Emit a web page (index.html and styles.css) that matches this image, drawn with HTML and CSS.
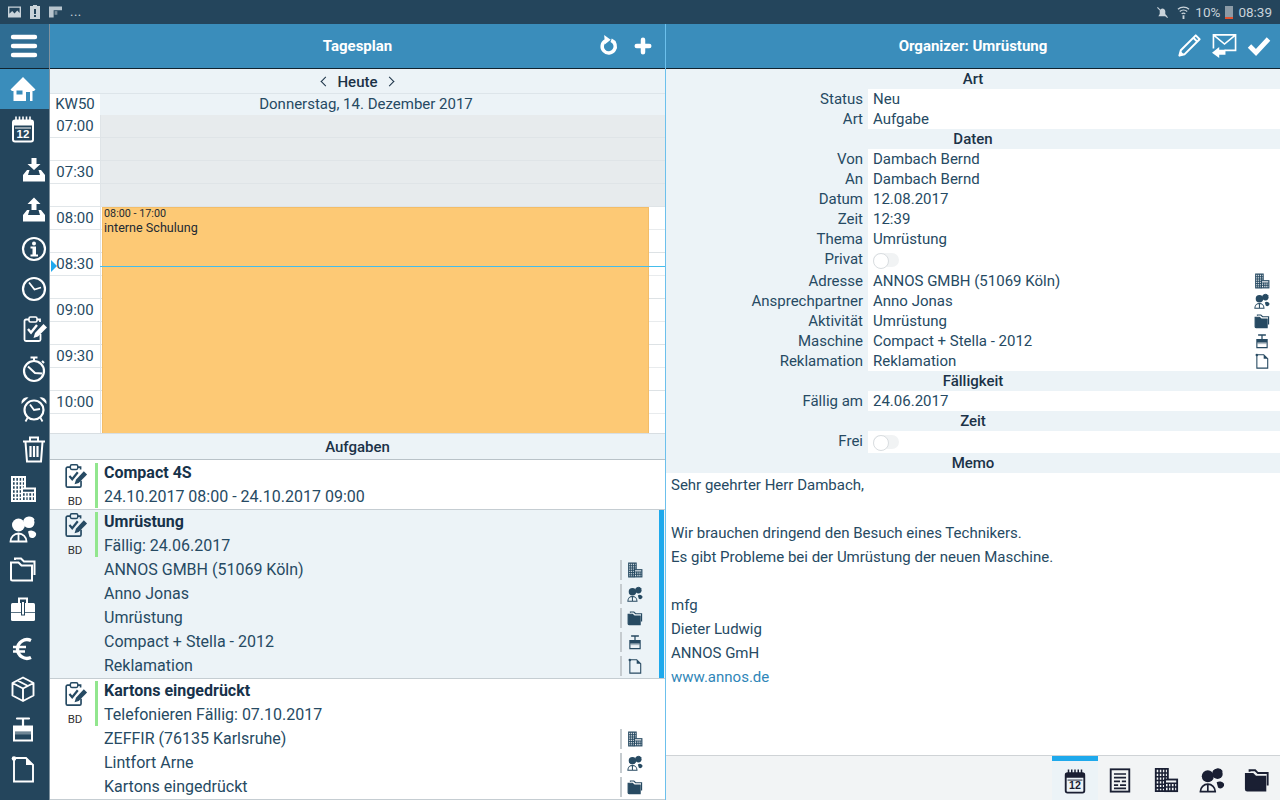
FILE: index.html
```html
<!DOCTYPE html>
<html lang="de">
<head>
<meta charset="utf-8">
<title>Organizer</title>
<link rel="stylesheet" href="styles.css">
</head>
<body>
<svg class="defs" width="0" height="0" aria-hidden="true">
  <symbol id="i-home" viewBox="0 0 28 28"><path fill="currentColor" d="M14 2 L26.500 14.500 L25 16 H23.500 V26 H4.500 V16 H3 L1.500 14.500 Z"/><path fill="var(--hole,#24455c)" d="M7.500 15.500 H13.500 V19.500 H7.500 Z M17 17 H21 V26 H17 Z"/></symbol>
  <symbol id="i-cal" viewBox="0 0 28 28"><g fill="none" stroke="currentColor"><rect x="4" y="5.500" width="20" height="21" rx="2" stroke-width="2"/><path stroke-width="1.600" d="M7 1.500V7M10.500 1.500V7M14 1.500V7M17.500 1.500V7M21 1.500V7"/></g><rect fill="currentColor" x="4" y="5.500" width="20" height="5"/><path fill="currentColor" d="M6 12.500H22V13.500H6Z"/></symbol>
  <symbol id="i-down" viewBox="0 0 28 28"><path fill="currentColor" d="M11.500 3H16.500V9H20.500L14 15L7.500 9H11.500Z M3 20L7 15H9.500L8 20H20L18.500 15H21L25 20V26.500H3Z"/></symbol>
  <symbol id="i-up" viewBox="0 0 28 28"><path fill="currentColor" d="M14 2.500L20.500 9H16.500V15H11.500V9H7.500Z M3 20L7 15H9.500L8 20H20L18.500 15H21L25 20V26.500H3Z"/></symbol>
  <symbol id="i-info" viewBox="0 0 28 28"><circle cx="14" cy="14" r="11" fill="none" stroke="currentColor" stroke-width="2.200"/><circle cx="14" cy="8.500" r="2" fill="currentColor"/><path fill="currentColor" d="M10.500 11.500H16V19.500H18V21.500H10.500V19.500H12.500V13.500H10.500Z"/></symbol>
  <symbol id="i-clock" viewBox="0 0 28 28"><circle cx="14" cy="14" r="11" fill="none" stroke="currentColor" stroke-width="2.200"/><path fill="none" stroke="currentColor" stroke-width="1.800" d="M9 7.500L14.500 14.500L21 12.500"/></symbol>
  <symbol id="i-task" viewBox="0 0 28 28"><g fill="none" stroke="currentColor"><path stroke-width="1.800" d="M9 4.500H6A1.500 1.500 0 0 0 4.500 6V24.500A1.500 1.500 0 0 0 6 26H19A1.500 1.500 0 0 0 20.500 24.500V19M17 4.500H20V7"/><rect x="9" y="2" width="8" height="5" rx="1.500" stroke-width="1.600"/><path stroke-width="2.400" d="M8 14L11 17.500L17 10"/></g><path fill="currentColor" d="M23.500 9L27 12.500L18 21.500L13.500 23L15 18Z"/></symbol>
  <symbol id="i-watch" viewBox="0 0 28 28"><circle cx="14" cy="16" r="10" fill="none" stroke="currentColor" stroke-width="2.200"/><path fill="none" stroke="currentColor" stroke-width="2" d="M10.500 2.500H17.500M14 2.500V6M22 6L24 8"/><path fill="none" stroke="currentColor" stroke-width="2" d="M8 11.500L15 18L22 18.500"/></symbol>
  <symbol id="i-alarm" viewBox="0 0 28 28"><circle cx="14" cy="15" r="9.500" fill="none" stroke="currentColor" stroke-width="2.200"/><path fill="currentColor" d="M1.500 9A5.500 5.500 0 0 1 8.500 2.500ZM26.500 9A5.500 5.500 0 0 0 19.500 2.500Z"/><path fill="none" stroke="currentColor" stroke-width="1.800" d="M10 9.500L14 15L20 14M7.500 23L5.500 26.500M20.500 23L22.500 26.500"/></symbol>
  <symbol id="i-trash" viewBox="0 0 28 28"><g fill="none" stroke="currentColor" stroke-width="2"><path d="M3 6.500H25M10 6V2.500H18V6M5.500 7L7 26.500H21L22.500 7"/><path stroke-width="2.200" d="M10.500 11V22M14 11V22M17.500 11V22"/></g></symbol>
  <symbol id="i-bldg" viewBox="0 0 28 28"><g fill="none" stroke="currentColor"><path stroke-width="2" d="M13 26H3V2H16V13"/><path stroke-width="1.700" d="M3 6.500H16M3 10.500H16M3 14.500H13M3 18.500H13M3 22.500H13M6.500 2V26M9.800 2V26M13 2V26"/><rect x="13" y="13.500" width="13" height="12.500" stroke-width="2"/><path stroke-width="1.700" d="M13 17.500H26M13 21.500H26M16.500 17V26M19.500 17V26M23 17V26"/></g></symbol>
  <symbol id="i-people" viewBox="0 0 28 28"><circle cx="9.500" cy="10" r="6.500" fill="currentColor"/><path fill="none" stroke="currentColor" stroke-width="1.800" d="M1.500 26.500A8 8 0 0 1 17.500 26.500ZM9.500 19V26.500"/><circle cx="20" cy="7.500" r="5.500" fill="currentColor"/><path fill="none" stroke="currentColor" stroke-width="1.500" d="M15 6A5.500 5.500 0 0 1 25 5"/><path fill="currentColor" d="M19 16.500A6 6 0 0 1 27 18A4 4 0 0 1 20.500 22Z"/></symbol>
  <symbol id="i-folder" viewBox="0 0 28 28"><g stroke="currentColor" stroke-width="2"><path fill="none" d="M6 5V3.500H12L15 6.500H25.500V20"/><path fill="var(--fi,none)" d="M2 7.500H9.500L12.500 10.500H23V25.500H3.500A1.500 1.500 0 0 1 2 24Z"/></g></symbol>
  <symbol id="i-case" viewBox="0 0 28 28"><path fill="none" stroke="currentColor" stroke-width="2" d="M10 8V3.500H18V8"/><path fill="currentColor" d="M2 9.500A1.500 1.500 0 0 1 3.500 8H24.500A1.500 1.500 0 0 1 26 9.500V24.500A1.500 1.500 0 0 1 24.500 26H3.500A1.500 1.500 0 0 1 2 24.500Z"/><path fill="var(--hole,#24455c)" d="M2 17H26V17.800H2ZM12 6H16V20.500H12Z"/><path fill="currentColor" d="M13 7H15V19.500H13Z"/></symbol>
  <symbol id="i-euro" viewBox="0 0 28 28"><path fill="none" stroke="currentColor" stroke-width="3.400" d="M22 5.500A9.500 9.500 0 0 0 8.500 14A9.500 9.500 0 0 0 22 22.500"/><path fill="none" stroke="currentColor" stroke-width="2.600" d="M4 12H17M4 16.500H16"/></symbol>
  <symbol id="i-box" viewBox="0 0 28 28"><path fill="none" stroke="currentColor" stroke-width="1.900" stroke-linejoin="round" d="M14 2.500L24.500 8V20.500L14 26L3.500 20.500V8ZM3.500 8L14 13.500L24.500 8M14 13.500V26M8.500 5.500L19 11"/></symbol>
  <symbol id="i-mach" viewBox="0 0 28 28"><path fill="none" stroke="currentColor" stroke-width="2.200" stroke-linecap="round" d="M8 3.500H20M14 3.500V11"/><path fill="currentColor" fill-rule="evenodd" d="M4 10.500H24V26.500H4ZM6 16.500V24.500H22V16.500Z"/><rect x="6" y="16.500" width="16" height="3" fill="currentColor" opacity=".35"/></symbol>
  <symbol id="i-doc" viewBox="0 0 28 28"><path fill="none" stroke="currentColor" stroke-width="1.900" d="M7 3H17L24 10V26.500H5V5"/><path fill="currentColor" d="M17 3L24 10H17Z"/><circle cx="5" cy="3.500" r="2.300" fill="currentColor"/></symbol>
  <symbol id="i-list" viewBox="0 0 28 28"><rect x="4" y="2.500" width="20" height="24" fill="none" stroke="currentColor" stroke-width="2"/><path stroke="currentColor" stroke-width="1.800" d="M7.500 7.500H20.500M7.500 11.500H20.500M7.500 15.500H14M16 15.500H20.500M7.500 19.500H12M14 19.500H20.500M7.500 23H20.500"/></symbol>
  <symbol id="i-refresh" viewBox="0 0 24 24"><path fill="none" stroke="currentColor" stroke-width="4" d="M8.500 6.500A7.500 7.500 0 1 0 15 6"/><path fill="currentColor" d="M7 0L14.500 5.500L8 10.500Z"/></symbol>
  <symbol id="i-plus" viewBox="0 0 24 24"><path fill="none" stroke="currentColor" stroke-width="5.400" stroke-linecap="round" d="M12 4.500V19.500M4.500 12H19.500"/></symbol>
  <symbol id="i-pencil" viewBox="0 0 26 26"><path fill="none" stroke="currentColor" stroke-width="2.100" stroke-linejoin="round" d="M19.500 2.500L23.500 6.500L8 22L2.500 23.500L4 18ZM17 5L21 9"/><path fill="currentColor" d="M2 24L3.500 18.500L7.500 22.500Z"/></symbol>
  <symbol id="i-mail" viewBox="0 0 26 26"><path fill="none" stroke="currentColor" stroke-width="1.700" d="M1.500 16V2H24.500V18H13M1.500 2L13 11.500L24.500 2"/><path fill="currentColor" d="M0 20.500L7.500 14.500V17.500H14V22.500H7.500V26Z"/></symbol>
  <symbol id="i-check" viewBox="0 0 24 24"><path fill="none" stroke="currentColor" stroke-width="4.800" d="M2.500 12L9 18.500L21.500 5"/></symbol>
  <symbol id="i-menu" viewBox="0 0 28 24"><path fill="none" stroke="currentColor" stroke-width="4.400" stroke-linecap="round" d="M3 3H25M3 12H25M3 21H25"/></symbol>
</svg>

<div class="status">
  <div class="status-left">
    <svg class="st-img" viewBox="0 0 14 12"><path fill="currentColor" fill-rule="evenodd" d="M0 0H14V12H0ZM1.500 1.500V8L4.500 5L7 7.500L10 4.500L12.500 7V1.500Z"/></svg>
    <svg class="st-bat" viewBox="0 0 10 14"><path fill="currentColor" fill-rule="evenodd" d="M3 0H7V1H10V14H0V1H3ZM4 4V9H6V4ZM4 10V12H6V10Z"/></svg>
    <svg class="st-sig" viewBox="0 0 14 12"><path fill="currentColor" opacity=".9" d="M0 0H14V4H5V12H0Z"/><path fill="currentColor" opacity=".5" d="M6 5H9V9H6Z"/></svg>
    <span class="st-dots">...</span>
  </div>
  <div class="status-right">
    <svg class="st-mute" viewBox="0 0 14 14"><path fill="currentColor" d="M5 3.500A3 3 0 0 1 10 5.500V9L12 11H2.500L4 8.500V5Z"/><path stroke="currentColor" stroke-width="1.200" d="M1.500 1.500L12.500 12.500"/></svg>
    <svg class="st-wifi" viewBox="0 0 14 14"><path fill="none" stroke="currentColor" stroke-width="1.300" d="M1 3.500A9 9 0 0 1 13 3.500M3 6A6 6 0 0 1 11 6M5 8.500A3 3 0 0 1 9 8.500"/><path fill="currentColor" d="M6 10H8V14H6Z"/></svg>
    <span class="st-pct">10%</span>
    <span class="st-battery"><span class="st-battery-low"></span></span>
    <span class="st-time">08:39</span>
  </div>
</div>

<div class="app">
  <nav class="side">
    <div class="side-menu"><svg class="menu-ic"><use href="#i-menu"/></svg></div>
    <div class="side-item active"><svg class="ic"><use href="#i-home"/></svg></div>
    <div class="side-item"><svg class="ic" viewBox="0 0 28 28"><use href="#i-cal"/><text class="cal-num" x="14" y="23">12</text></svg></div>
    <div class="side-item indent"><svg class="ic"><use href="#i-down"/></svg></div>
    <div class="side-item indent"><svg class="ic"><use href="#i-up"/></svg></div>
    <div class="side-item indent"><svg class="ic"><use href="#i-info"/></svg></div>
    <div class="side-item indent"><svg class="ic"><use href="#i-clock"/></svg></div>
    <div class="side-item indent"><svg class="ic"><use href="#i-task"/></svg></div>
    <div class="side-item indent"><svg class="ic"><use href="#i-watch"/></svg></div>
    <div class="side-item indent"><svg class="ic"><use href="#i-alarm"/></svg></div>
    <div class="side-item indent"><svg class="ic"><use href="#i-trash"/></svg></div>
    <div class="side-item"><svg class="ic"><use href="#i-bldg"/></svg></div>
    <div class="side-item"><svg class="ic"><use href="#i-people"/></svg></div>
    <div class="side-item"><svg class="ic"><use href="#i-folder"/></svg></div>
    <div class="side-item"><svg class="ic"><use href="#i-case"/></svg></div>
    <div class="side-item"><svg class="ic"><use href="#i-euro"/></svg></div>
    <div class="side-item"><svg class="ic"><use href="#i-box"/></svg></div>
    <div class="side-item"><svg class="ic"><use href="#i-mach"/></svg></div>
    <div class="side-item"><svg class="ic"><use href="#i-doc"/></svg></div>
  </nav>

  <section class="pane pane-left">
    <header class="bar">
      <h1 class="bar-title">Tagesplan</h1>
      <div class="bar-actions bar-actions-left">
        <svg class="bar-ic-r"><use href="#i-refresh"/></svg>
        <svg class="bar-ic-s"><use href="#i-plus"/></svg>
      </div>
    </header>

    <div class="day-nav"><span class="chev chev-l"></span><b>Heute</b><span class="chev chev-r"></span></div>
    <div class="day-head"><div class="kw">KW50</div><div class="day-date">Donnerstag, 14. Dezember 2017</div></div>

    <div class="grid">
      <div class="slot off"><div class="slot-time">07:00</div><div class="slot-body"><div class="half"></div><div class="half"></div></div></div>
      <div class="slot off"><div class="slot-time">07:30</div><div class="slot-body"><div class="half"></div><div class="half"></div></div></div>
      <div class="slot"><div class="slot-time">08:00</div><div class="slot-body"><div class="half"></div><div class="half"></div></div></div>
      <div class="slot"><div class="slot-time">08:30</div><div class="slot-body"><div class="half"></div><div class="half"></div></div></div>
      <div class="slot"><div class="slot-time">09:00</div><div class="slot-body"><div class="half"></div><div class="half"></div></div></div>
      <div class="slot"><div class="slot-time">09:30</div><div class="slot-body"><div class="half"></div><div class="half"></div></div></div>
      <div class="slot"><div class="slot-time">10:00</div><div class="slot-body"><div class="half"></div><div class="half"></div></div></div>
      <div class="event"><div class="event-time">08:00 - 17:00</div><div class="event-title">interne Schulung</div></div>
      <div class="now-line"></div>
      <div class="now-mark"></div>
    </div>

    <div class="sec-head">Aufgaben</div>

    <div class="tasks">
      <article class="task">
        <div class="task-side"><svg class="task-ic"><use href="#i-task"/></svg><span class="task-who">BD</span></div>
        <div class="task-main">
          <div class="row row-title">Compact 4S</div>
          <div class="row">24.10.2017 08:00 - 24.10.2017 09:00</div>
        </div>
      </article>
      <article class="task selected">
        <div class="task-side"><svg class="task-ic"><use href="#i-task"/></svg><span class="task-who">BD</span></div>
        <div class="task-main">
          <div class="row row-title">Umrüstung</div>
          <div class="row">Fällig: 24.06.2017</div>
          <div class="row link"><span>ANNOS GMBH (51069 Köln)</span><span class="link-ic"><svg class="mini"><use href="#i-bldg"/></svg></span></div>
          <div class="row link"><span>Anno Jonas</span><span class="link-ic"><svg class="mini"><use href="#i-people"/></svg></span></div>
          <div class="row link"><span>Umrüstung</span><span class="link-ic filled"><svg class="mini"><use href="#i-folder"/></svg></span></div>
          <div class="row link"><span>Compact + Stella - 2012</span><span class="link-ic"><svg class="mini"><use href="#i-mach"/></svg></span></div>
          <div class="row link"><span>Reklamation</span><span class="link-ic"><svg class="mini"><use href="#i-doc"/></svg></span></div>
        </div>
      </article>
      <article class="task">
        <div class="task-side"><svg class="task-ic"><use href="#i-task"/></svg><span class="task-who">BD</span></div>
        <div class="task-main">
          <div class="row row-title">Kartons eingedrückt</div>
          <div class="row">Telefonieren Fällig: 07.10.2017</div>
          <div class="row link"><span>ZEFFIR (76135 Karlsruhe)</span><span class="link-ic"><svg class="mini"><use href="#i-bldg"/></svg></span></div>
          <div class="row link"><span>Lintfort Arne</span><span class="link-ic"><svg class="mini"><use href="#i-people"/></svg></span></div>
          <div class="row link"><span>Kartons eingedrückt</span><span class="link-ic filled"><svg class="mini"><use href="#i-folder"/></svg></span></div>
        </div>
      </article>
    </div>
  </section>

  <section class="pane pane-right">
    <header class="bar">
      <h1 class="bar-title">Organizer: Umrüstung</h1>
      <div class="bar-actions bar-actions-right">
        <svg class="bar-ic"><use href="#i-pencil"/></svg>
        <svg class="bar-ic"><use href="#i-mail"/></svg>
        <svg class="bar-ic-c"><use href="#i-check"/></svg>
      </div>
    </header>

    <div class="form">
      <div class="form-head">Art</div>
      <div class="f"><div class="f-l">Status</div><div class="f-v">Neu</div></div>
      <div class="f"><div class="f-l">Art</div><div class="f-v">Aufgabe</div></div>
      <div class="form-head">Daten</div>
      <div class="f"><div class="f-l">Von</div><div class="f-v">Dambach Bernd</div></div>
      <div class="f"><div class="f-l">An</div><div class="f-v">Dambach Bernd</div></div>
      <div class="f"><div class="f-l">Datum</div><div class="f-v">12.08.2017</div></div>
      <div class="f"><div class="f-l">Zeit</div><div class="f-v">12:39</div></div>
      <div class="f"><div class="f-l">Thema</div><div class="f-v">Umrüstung</div></div>
      <div class="f f-tall"><div class="f-l">Privat</div><div class="f-v"><span class="toggle"></span></div></div>
      <div class="f"><div class="f-l">Adresse</div><div class="f-v">ANNOS GMBH (51069 Köln)<svg class="mini f-ic"><use href="#i-bldg"/></svg></div></div>
      <div class="f"><div class="f-l">Ansprechpartner</div><div class="f-v">Anno Jonas<svg class="mini f-ic"><use href="#i-people"/></svg></div></div>
      <div class="f"><div class="f-l">Aktivität</div><div class="f-v filled">Umrüstung<svg class="mini f-ic"><use href="#i-folder"/></svg></div></div>
      <div class="f"><div class="f-l">Maschine</div><div class="f-v">Compact + Stella - 2012<svg class="mini f-ic"><use href="#i-mach"/></svg></div></div>
      <div class="f"><div class="f-l">Reklamation</div><div class="f-v">Reklamation<svg class="mini f-ic"><use href="#i-doc"/></svg></div></div>
      <div class="form-head">Fälligkeit</div>
      <div class="f"><div class="f-l">Fällig am</div><div class="f-v">24.06.2017</div></div>
      <div class="form-head">Zeit</div>
      <div class="f f-tall"><div class="f-l">Frei</div><div class="f-v"><span class="toggle"></span></div></div>
      <div class="form-head">Memo</div>
      <div class="memo">
        <p>Sehr geehrter Herr Dambach,</p>
        <p>&nbsp;</p>
        <p>Wir brauchen dringend den Besuch eines Technikers.</p>
        <p>Es gibt Probleme bei der Umrüstung der neuen Maschine.</p>
        <p>&nbsp;</p>
        <p>mfg</p>
        <p>Dieter Ludwig</p>
        <p>ANNOS GmH</p>
        <p class="memo-link">www.annos.de</p>
      </div>
    </div>

    <footer class="tabs">
      <div class="tab on"><svg class="tab-ic" viewBox="0 0 28 28"><use href="#i-cal"/><text class="cal-num" x="14" y="23">12</text></svg></div>
      <div class="tab"><svg class="tab-ic"><use href="#i-list"/></svg></div>
      <div class="tab"><svg class="tab-ic"><use href="#i-bldg"/></svg></div>
      <div class="tab"><svg class="tab-ic"><use href="#i-people"/></svg></div>
      <div class="tab filled"><svg class="tab-ic"><use href="#i-folder"/></svg></div>
    </footer>
  </section>
</div>
</body>
</html>
```

FILE: styles.css
```css
* { box-sizing: border-box; }
html, body { margin: 0; padding: 0; }
body {
  width: 1280px; height: 800px; overflow: hidden;
  display: flex; flex-direction: column;
  font-family: Roboto, "Noto Sans", sans-serif;
  font-size: 15px; color: #264a63; background: #fff;
}
.defs { position: absolute; }
.cal-num {
  font-family: "Liberation Sans", sans-serif; font-weight: 700; font-size: 11.5px;
  text-anchor: middle; fill: currentColor;
}

.status {
  height: 24px; flex: none; background: #24455c; color: #c9d3da;
  display: flex; justify-content: space-between; align-items: center;
}
.status-left { display: flex; align-items: center; padding-left: 8px; }
.st-img { width: 13px; height: 12px; }
.st-bat { width: 10px; height: 14px; margin-left: 9px; }
.st-sig { width: 13px; height: 12px; margin-left: 9px; }
.st-dots { margin-left: 8px; font-size: 13px; line-height: 18px; letter-spacing: .5px; }
.status-right { display: flex; align-items: center; padding-right: 8px; }
.st-mute { width: 13px; height: 13px; }
.st-wifi { width: 13px; height: 13px; margin-left: 8px; }
.st-pct { margin-left: 5px; font-size: 13.5px; }
.st-battery {
  width: 8px; height: 13px; margin-left: 5px; background: #8c9ba6;
  display: flex; align-items: flex-end;
}
.st-battery-low { display: block; width: 100%; height: 2px; background: #e0532f; }
.st-time { margin-left: 5px; font-size: 13.5px; }

.app { flex: 1; min-height: 0; display: flex; }

.side {
  width: 50px; flex: none; background: #24455c; color: #fff;
  border-right: 1px solid #7f929f; overflow: hidden;
}
.side-menu {
  height: 45px; background: #2f6d93; border-bottom: 1px solid #10232f;
  display: flex; align-items: center; justify-content: center;
  padding-right: 1px;
}
.menu-ic { width: 28px; height: 24px; }
.side-item {
  height: 40px; display: flex; align-items: center; justify-content: center;
  padding-right: 3px;
}
.side-item.indent { padding-right: 0; padding-left: 18px; }
.side-item.active { background: #3a8dbb; --hole: #3a8dbb; }
.ic { width: 28px; height: 28px; flex: none; }

.pane { display: flex; flex-direction: column; min-width: 0; }
.pane-left { width: 616px; flex: none; border-right: 1px solid #6cc0ec; }
.pane-right { flex: 1; }

.bar {
  height: 45px; flex: none; position: relative; background: #3a8dbb; color: #fff;
  border-bottom: 1px solid #10232f;
  display: flex; align-items: center; justify-content: center;
}
.bar-title { margin: 0; font-size: 15px; font-weight: 700; }
.bar-actions { position: absolute; top: 0; bottom: 1px; display: flex; align-items: center; }
.bar-actions-left { right: 12px; gap: 14px; }
.bar-actions-right { right: 9px; gap: 10px; }
.bar-ic-s { width: 20px; height: 20px; }
.bar-ic-r { width: 21px; height: 21px; }
.bar-ic { width: 25px; height: 25px; }
.bar-ic-c { width: 24px; height: 24px; }

.day-nav {
  height: 24px; flex: none; background: #ecf3f7;
  display: flex; align-items: center; justify-content: center; gap: 8px;
  color: #1b3247; padding-top: 2px;
}
.day-nav b { font-weight: 500; }
.chev { width: 7px; height: 7px; border-top: 1px solid #1b3247; border-left: 1px solid #1b3247; margin-bottom: 2px; }
.chev-l { transform: rotate(-45deg); }
.chev-r { transform: rotate(135deg); }

.day-head { height: 22px; flex: none; display: flex; border-top: 1px solid #dde5ea; }
.kw { width: 50px; flex: none; text-align: center; line-height: 21px; background: #fff; }
.day-date { flex: 1; background: #ecf3f7; text-align: center; line-height: 21px; padding-right: 33px; }

.grid { height: 318px; flex: none; position: relative; overflow: hidden; }
.slot { height: 46px; display: flex; }
.slot-time {
  width: 50px; flex: none; text-align: center; line-height: 23px;
  border-bottom: 1px solid #e1e6e9;
  background: linear-gradient(#fff 22px, #e1e6e9 22px, #e1e6e9 23px, #fff 23px);
}
.slot-body { flex: 1; border-left: 1px solid #dfe4e7; }
.half { height: 23px; border-bottom: 1px solid #e8ebed; }
.half + .half { border-bottom-color: #dde2e5; }
.slot.off .slot-body { background: #e7ebed; }
.slot.off .half { border-bottom-color: #dfe4e7; }
.event {
  position: absolute; left: 52px; top: 92px; width: 547px; height: 240px;
  background: #fdc975; border: 1px solid #f3bd68; color: #1e2a33;
  padding: 0 1px;
}
.event-time { font-size: 10.8px; line-height: 12px; }
.event-title { font-size: 12.6px; line-height: 16px; }
.now-line { position: absolute; left: 50px; right: 0; top: 151px; height: 1px; background: #45bdec; }
.now-mark {
  position: absolute; left: 1px; top: 145px; width: 0; height: 0;
  border-left: 6px solid #1fa8ee; border-top: 6px solid transparent; border-bottom: 6px solid transparent;
}

.sec-head {
  height: 27px; flex: none; background: #ecf3f7; text-align: center; line-height: 26px;
  font-weight: 500; color: #1b3247;
  border-top: 1px solid #d8dee2; border-bottom: 1px solid #b9c2c8;
}

.tasks { flex: 1; min-height: 0; overflow: hidden; }
.task { display: flex; position: relative; border-bottom: 1px solid #c5cdd2; background: #fff; }
.task:first-child { padding-top: 1px; }
.task.selected { background: #ecf3f7; }
.task.selected::after {
  content: ""; position: absolute; right: 1px; top: 0; bottom: 0; width: 5px; background: #1ea9ec;
}
.task-side {
  width: 45px; flex: none; display: flex; flex-direction: column; align-items: center; padding-top: 2px; padding-left: 5px;
}
.task-ic { width: 26px; height: 26px; }
.task-who { font-size: 11.5px; line-height: 14px; margin-top: 5px; color: #333; }
.task-main { flex: 1; position: relative; padding-left: 9px; min-width: 0; }
.task-main::before {
  content: ""; position: absolute; left: 0; top: 2px; height: 45px; width: 3px; background: #92e68e;
}
.row { height: 24px; line-height: 24px; font-size: 16px; display: flex; justify-content: space-between; }
.row-title { font-weight: 700; color: #17324a; }
.link { padding-right: 17px; }
.link-ic {
  width: 28px; height: 20px; margin-top: 2px; border-left: 2px solid #c5cbcf;
  display: flex; align-items: center; justify-content: center;
}
.filled { --fi: currentColor; }
.mini { width: 16px; height: 16px; color: #274a62; }

.form { flex: 1; min-height: 0; }
.form-head {
  height: 20px; line-height: 20px; background: #ecf3f7; text-align: center;
  font-weight: 500; color: #1b3247;
}
.f { height: 20px; display: flex; line-height: 20px; }
.f-tall { height: 22px; }
.f-l { width: 202px; flex: none; background: #ecf3f7; text-align: right; padding-right: 5px; }
.f-v { flex: 1; padding: 0 11px 0 5px; display: flex; align-items: center; justify-content: space-between; }
.f-ic { margin-right: -1px; }
.toggle {
  display: block; width: 26px; height: 14px; border-radius: 7px; background: #f1f3f4; position: relative;
}
.toggle::before {
  content: ""; position: absolute; left: 0; top: 0; width: 14px; height: 14px; border-radius: 50%;
  background: #fff; border: 1px solid #d9dde0;
}
.memo { padding-left: 5px; }
.memo p { margin: 0; height: 24px; line-height: 24px; }
.memo-link { color: #2f86b8; }

.tabs {
  height: 45px; flex: none; background: #f2f4f5; border-top: 1px solid #cfd3d6;
  display: flex; justify-content: flex-end; color: #1a1f33; --hole: #f2f4f5;
}
.tab { width: 45.6px; display: flex; align-items: center; justify-content: center; padding-top: 4px; }
.tab.on { background: #ecf3f7; border-top: 5px solid #1ea9ec; padding-top: 0; }
.tab-ic { width: 26px; height: 26px; }
```
